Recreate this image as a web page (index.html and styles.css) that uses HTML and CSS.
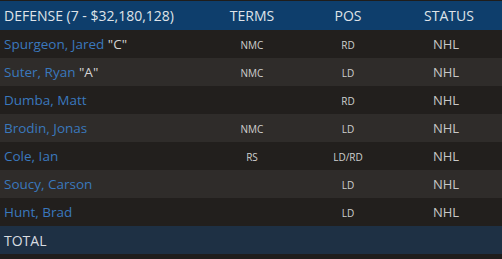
FILE: index.html
```html
<!DOCTYPE html>
<html>
<head>
<meta charset="utf-8">
<link rel="stylesheet" href="styles.css">
</head>
<body>
<div class="table">
  <div class="row head">
    <div class="c name">DEFENSE (7 - $32,180,128)</div>
    <div class="c mid">TERMS</div>
    <div class="c mid">POS</div>
    <div class="c mid">STATUS</div>
  </div>
  <div class="row odd">
    <div class="c name"><a>Spurgeon, Jared</a> <span class="tag">"C"</span></div>
    <div class="c mid sm">NMC</div>
    <div class="c mid sm">RD</div>
    <div class="c mid st">NHL</div>
  </div>
  <div class="row even">
    <div class="c name"><a>Suter, Ryan</a> <span class="tag">"A"</span></div>
    <div class="c mid sm">NMC</div>
    <div class="c mid sm">LD</div>
    <div class="c mid st">NHL</div>
  </div>
  <div class="row odd">
    <div class="c name"><a>Dumba, Matt</a></div>
    <div class="c mid sm"></div>
    <div class="c mid sm">RD</div>
    <div class="c mid st">NHL</div>
  </div>
  <div class="row even">
    <div class="c name"><a>Brodin, Jonas</a></div>
    <div class="c mid sm">NMC</div>
    <div class="c mid sm">LD</div>
    <div class="c mid st">NHL</div>
  </div>
  <div class="row odd">
    <div class="c name"><a>Cole, Ian</a></div>
    <div class="c mid sm">RS</div>
    <div class="c mid sm">LD/RD</div>
    <div class="c mid st">NHL</div>
  </div>
  <div class="row even">
    <div class="c name"><a>Soucy, Carson</a></div>
    <div class="c mid sm"></div>
    <div class="c mid sm">LD</div>
    <div class="c mid st">NHL</div>
  </div>
  <div class="row odd">
    <div class="c name"><a>Hunt, Brad</a></div>
    <div class="c mid sm"></div>
    <div class="c mid sm">LD</div>
    <div class="c mid st">NHL</div>
  </div>
  <div class="row total">
    <div class="c name">TOTAL</div>
    <div class="c mid"></div>
    <div class="c mid"></div>
    <div class="c mid"></div>
  </div>
</div>
</body>
</html>
```
FILE: styles.css
```css
html, body {
  margin: 0;
  padding: 0;
  background: #1f1d1c;
}
body {
  font-family: "Open Sans", "Liberation Sans", sans-serif;
  width: 502px;
  height: 259px;
  overflow: hidden;
}
.table {
  padding-top: 1px;
}
.row {
  display: grid;
  grid-template-columns: 204px 96px 96px 1fr;
  height: 28px;
  align-items: center;
}
.head {
  background: #0e3e6c;
  color: #dfe3e8;
  font-size: 14px;
  height: 29px;
}
.head .name {
  font-size: 14px;
}
.odd {
  background: #221f1d;
}
.even {
  background: #2f2c2a;
}
.total {
  background: #1e3044;
  color: #d8dce0;
}
.total .name {
  font-size: 14px;
}
.c {
  white-space: nowrap;
}
.name {
  padding-left: 4px;
  font-size: 13.5px;
}
.name a {
  color: #3a78bd;
}
.tag {
  color: #d4d4d4;
}
.mid {
  text-align: center;
}
.sm {
  font-size: 10px;
  color: #cfcfcf;
  padding-top: 1px;
}
.st {
  font-size: 13px;
  color: #c8c8c8;
  padding-right: 6px;
}
```
